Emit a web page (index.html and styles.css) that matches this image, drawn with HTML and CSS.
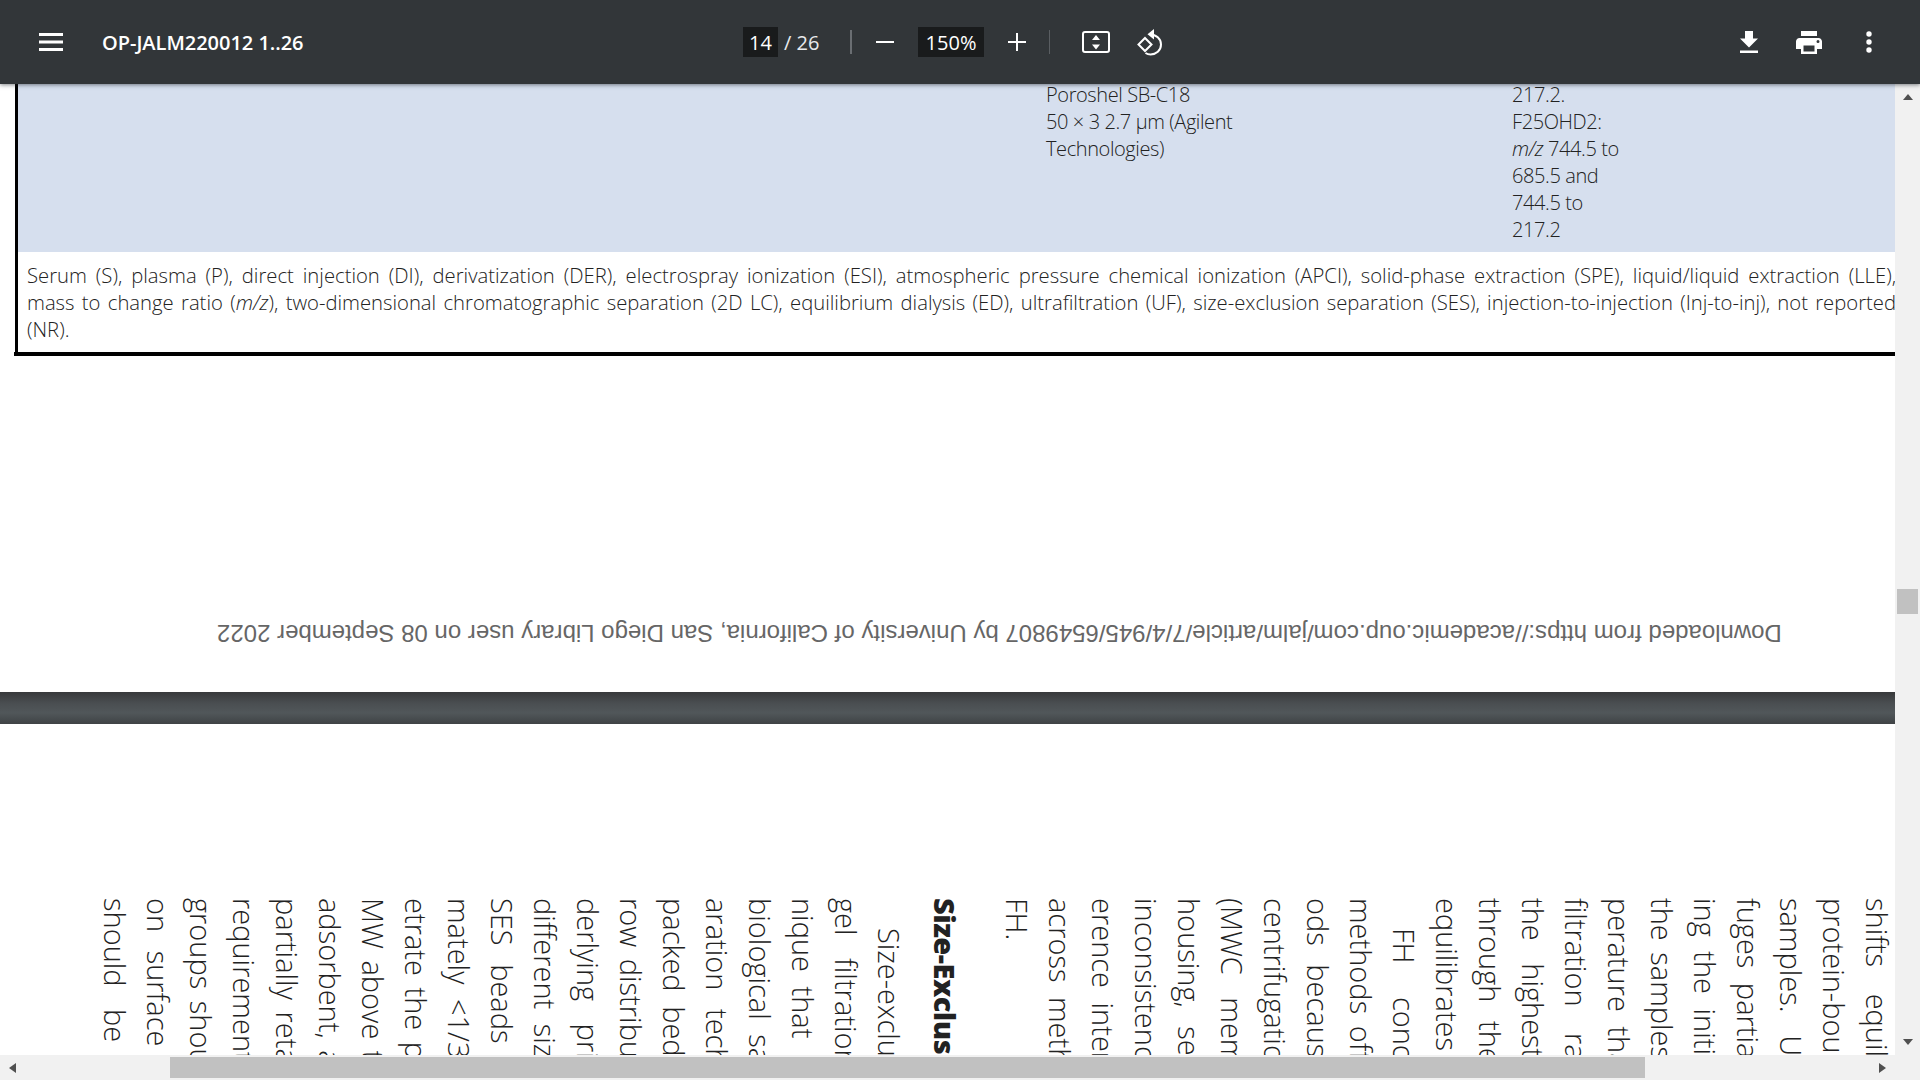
FILE: index.html
```html
<!DOCTYPE html>
<html lang="en">
<head>
<meta charset="utf-8">
<title>OP-JALM220012 1..26</title>
<link rel="stylesheet" href="styles.css">
</head>
<body>
<header class="toolbar">
  <div class="tb-left">
    <svg class="ic-menu" viewBox="0 0 24 18"><path d="M0 0h24v3H0zM0 7.500h24v3H0zM0 15h24v3H0z"/></svg>
    <span class="doc-title">OP-JALM220012 1..26</span>
  </div>
  <div class="tb-center">
    <span class="field page-field">14</span>
    <span class="page-total">/ 26</span>
    <span class="sep sep-a"></span>
    <svg class="ic-minus" viewBox="0 0 18 2"><path d="M0 0h18v2H0z"/></svg>
    <span class="field zoom-field">150%</span>
    <svg class="ic-plus" viewBox="0 0 18 18"><path d="M8 0h2v8h8v2h-8v8H8v-8H0V8h8z"/></svg>
    <span class="sep sep-b"></span>
    <svg class="ic-fit" viewBox="0 0 28 22"><rect x="1" y="1" width="26" height="20" rx="2" fill="none" stroke="#fff" stroke-width="2"/><path d="M14 4l4 5h-8zM14 18.500l-4-5h8z"/></svg>
    <svg class="ic-rotate" viewBox="0 0 27 27"><path d="M8 9l6.500 6.500L8 22l-6.500-6.500z" fill="none" stroke="#fff" stroke-width="2"/><path d="M13 5.500c6 0 11 4 11 10s-5 10-10.500 10c-2 0-3.500-.5-5-1.500" fill="none" stroke="#fff" stroke-width="2"/><path d="M17 0v10.500L10.500 5.300z"/></svg>
  </div>
  <div class="tb-right">
    <svg class="ic-down" viewBox="0 0 18 22"><path d="M5 0h8v7.500h5l-9 9-9-9h5zM0 19.500h18V22H0z"/></svg>
    <svg class="ic-print" viewBox="0 0 26 23"><path d="M5 0h16v5H5zM3.500 7h19C24.400 7 26 8.600 26 10.500V18h-5v5H5v-5H0v-7.500C0 8.600 1.600 7 3.500 7zM7.500 14.500V20.500h11V14.500zM22 9a1.500 1.500 0 1 0 0 3 1.500 1.500 0 0 0 0-3z" fill-rule="evenodd"/></svg>
    <svg class="ic-more" viewBox="0 0 6 22"><circle cx="3" cy="3" r="2.700"/><circle cx="3" cy="11" r="2.700"/><circle cx="3" cy="19" r="2.700"/></svg>
  </div>
</header>
<main class="shell">
  <div class="viewer">
    <section class="page-one">
      <div class="tbl-frame">
        <div class="tbl-row">
          <div class="cell-a">Poroshel SB-C18<br>50 × 3 2.7 µm (Agilent<br>Technologies)</div>
          <div class="cell-b">217.2.<br>F25OHD2:<br><i>m/z</i> 744.5 to<br>685.5 and<br>744.5 to<br>217.2</div>
        </div>
        <div class="tbl-note">
          <div class="note-line">Serum (S), plasma (P), direct injection (DI), derivatization (DER), electrospray ionization (ESI), atmospheric pressure chemical ionization (APCI), solid-phase extraction (SPE), liquid/liquid extraction (LLE),</div>
          <div class="note-line">mass to change ratio (<i>m/z</i>), two-dimensional chromatographic separation (2D LC), equilibrium dialysis (ED), ultrafiltration (UF), size-exclusion separation (SES), injection-to-injection (Inj-to-inj), not reported</div>
          <div>(NR).</div>
        </div>
      </div>
      <p class="download">Downloaded from https://academic.oup.com/jalm/article/7/4/945/6549807 by University of California, San Diego Library user on 08 September 2022</p>
    </section>
    <div class="page-gap"></div>
    <section class="page-two">
      <div class="rotated">
        <div class="ln s5">shifts equilibrium</div>
        <div class="ln">protein-bound</div>
        <div class="ln s4">samples. Ultrafiltration</div>
        <div class="ln s2">fuges partially</div>
        <div class="ln s2">ing the initial</div>
        <div class="ln s1">the samples</div>
        <div class="ln s2">perature that</div>
        <div class="ln s5">filtration rate</div>
        <div class="ln s4">the highest</div>
        <div class="ln s3">through the</div>
        <div class="ln">equilibrates</div>
        <div class="ln in s6">FH concentration</div>
        <div class="ln s1">methods offer</div>
        <div class="ln s3">ods because</div>
        <div class="ln">centrifugation</div>
        <div class="ln s4">(MWC membrane</div>
        <div class="ln s3">housing, several</div>
        <div class="ln">inconsistencies</div>
        <div class="ln s2">erence interval</div>
        <div class="ln s2">across methods</div>
        <div class="ln">FH.</div>
        <div class="ln hd">Size-Exclusion</div>
        <div class="ln in sub">Size-exclusion</div>
        <div class="ln s4">gel filtration</div>
        <div class="ln s2">nique that relies</div>
        <div class="ln s2">biological samples</div>
        <div class="ln s3">aration technique</div>
        <div class="ln s2">packed bed</div>
        <div class="ln s1">row distribution</div>
        <div class="ln s4">derlying principle</div>
        <div class="ln s2">different sizes</div>
        <div class="ln s3">SES beads</div>
        <div class="ln s2">mately &lt;1/3</div>
        <div class="ln s1">etrate the pores</div>
        <div class="ln s1">MW above the</div>
        <div class="ln s1">adsorbent, and</div>
        <div class="ln s1">partially retain</div>
        <div class="ln">requirements</div>
        <div class="ln s1">groups should</div>
        <div class="ln s3">on surface</div>
        <div class="ln s4">should be</div>
      </div>
    </section>
  </div>
  <div class="vbar">
    <span class="ar ar-up"></span>
    <span class="vthumb"></span>
    <span class="ar ar-dn"></span>
  </div>
  <div class="hbar">
    <span class="ar ar-lf"></span>
    <span class="hthumb"></span>
    <span class="ar ar-rt"></span>
  </div>
  <div class="corner"></div>
</main>
</body>
</html>
```
FILE: styles.css
```css
* { box-sizing: border-box; }
html, body { margin: 0; height: 100%; overflow: hidden; }
body { display: flex; flex-direction: column; height: 100vh; background: #fff; font-family: "Open Sans", "Liberation Sans", sans-serif; }

.toolbar { flex: 0 0 84px; display: flex; align-items: center; background: #323639; color: #fff; position: relative; z-index: 2; box-shadow: 0 1px 4px rgba(30,34,40,.55); fill: #fff; }
.tb-left { flex: 0 0 743px; display: flex; align-items: center; padding-left: 39px; }
.ic-menu { width: 24px; height: 18px; flex: none; }
.doc-title { margin-left: 39px; font-size: 20px; font-weight: 600; white-space: nowrap; letter-spacing: -.03px; }
.tb-center { display: flex; align-items: center; }
.field { display: flex; align-items: center; justify-content: center; height: 30px; background: #191b1c; font-size: 20px; font-weight: 400; }
.page-field { width: 35px; }
.page-total { margin-left: 6px; width: 39px; font-size: 20px; color: #e8eaed; white-space: nowrap; }
.sep { width: 2px; height: 24px; background: #6a6e72; }
.sep-a { margin-left: 27px; }
.ic-minus { width: 18px; height: 2px; margin-left: 24px; }
.zoom-field { width: 66px; margin-left: 24px; }
.ic-plus { width: 18px; height: 18px; margin-left: 24px; }
.sep-b { margin-left: 23px; width: 1px; background: #5a5e62; }
.ic-fit { width: 28px; height: 22px; margin-left: 32px; }
.ic-rotate { width: 27px; height: 27px; margin-left: 27px; }
.tb-right { margin-left: auto; display: flex; align-items: center; padding-right: 48px; }
.ic-down { width: 18px; height: 22px; }
.ic-print { width: 26px; height: 23px; margin-left: 38px; }
.ic-more { width: 6px; height: 22px; margin-left: 44px; }

.shell { flex: 1; min-height: 0; display: grid; grid-template-columns: 1fr 25px; grid-template-rows: 1fr 25px; }
.viewer { overflow: hidden; background: #fff; color: #222; min-width: 0; }

.page-one { height: 611px; margin-top: -3px; padding-left: 14px; display: flex; flex-direction: column; background: #fff; }
.tbl-frame { width: 1900px; border-bottom: 4px solid #000; }
.tbl-row { margin-left: 1px; border-left: 3px solid #000; background: #d6dfee; display: grid; grid-template-columns: 1494px 1fr; padding-bottom: 9px; font-size: 20px; font-weight: 300; line-height: 27px; letter-spacing: -.4px; }
.cell-a { padding-left: 1028px; white-space: nowrap; }
.cell-b { white-space: nowrap; }
.tbl-note { margin-left: 1px; border-left: 3px solid #000; padding: 10px 0 9px 9px; font-size: 20.250px; font-weight: 300; line-height: 27px; letter-spacing: 0; }
.note-line { width: 1869px; text-align: justify; text-align-last: justify; }
.download { width: fit-content; margin: 264px 0 0 203px; transform: rotate(180deg); font-family: "Liberation Sans", Arial, sans-serif; font-size: 24px; line-height: 26px; color: #666; white-space: nowrap; }

.page-gap { height: 32px; background: linear-gradient(#38393b 0, #4a4e51 35%, #51575a 65%, #3f4345 100%); }

.page-two { padding-top: 174px; height: 500px; background: #fff; }
.rotated { writing-mode: vertical-rl; width: calc(100% + 4px); height: 400px; font-size: 29px; font-weight: 300; line-height: 43px; color: #222; }
.ln { white-space: nowrap; }
.in { padding-inline-start: 30px; }
.hd { font-weight: 800; margin-block-start: 29px; letter-spacing: -.5px; }
.sub { margin-block-start: 13px; }
.s1 { word-spacing: 4px; }
.s2 { word-spacing: 7px; }
.s3 { word-spacing: 11px; }
.s4 { word-spacing: 15px; }
.s5 { word-spacing: 19px; }
.s6 { word-spacing: 26px; }

.vbar { background: #f1f1f1; display: flex; flex-direction: column; align-items: center; padding: 10px 0 10px; }
.vthumb { width: 21px; height: 25px; background: #c1c1c1; margin-top: 489px; }
.hbar { background: #f1f1f1; display: flex; align-items: center; padding: 0 9px; }
.hthumb { width: 1475px; height: 21px; background: #c1c1c1; margin-left: 154px; }
.corner { background: #f1f1f1; }
.ar { width: 0; height: 0; flex: none; border-style: solid; border-color: transparent; }
.ar-up { border-width: 0 5.500px 6px; border-bottom-color: #505050; }
.ar-dn { margin-top: auto; border-width: 6px 5.500px 0; border-top-color: #505050; }
.ar-lf { border-width: 5.500px 7px 5.500px 0; border-right-color: #505050; }
.ar-rt { margin-left: auto; border-width: 5.500px 0 5.500px 7px; border-left-color: #505050; }
```
